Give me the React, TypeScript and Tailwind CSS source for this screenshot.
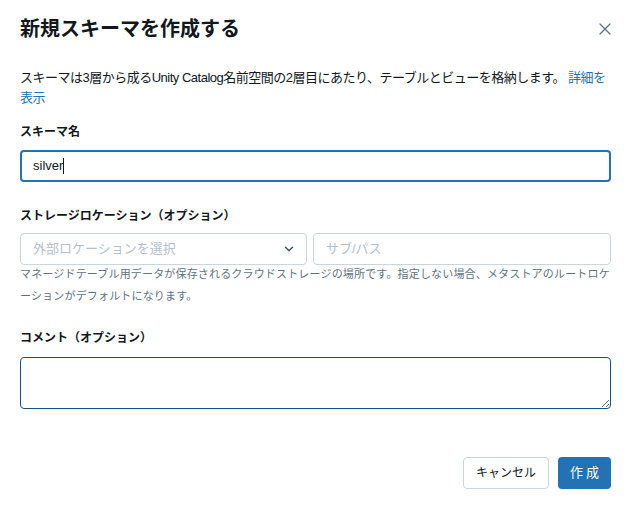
import { X, ChevronDown } from "lucide-react"

export default function App() {
  return (
    <div
      className="w-[631px] h-[510px] bg-white flex flex-col px-5 text-[#11171c]"
      style={{ fontFamily: '"Liberation Sans", "Noto Sans CJK JP", sans-serif' }}
    >
      {/* Header */}
      <div className="flex items-center justify-between pt-[16px]">
        <h1 className="text-[20px] font-bold leading-[26px]">新規スキーマを作成する</h1>
        <button className="text-[#5f7281] -mr-1">
          <X size={20} strokeWidth={1.5} />
        </button>
      </div>

      {/* Description */}
      <p className="mt-[26px] text-[13px] leading-[20px] tracking-[-0.5px]">
        スキーマは3層から成るUnity Catalog名前空間の2層目にあたり、テーブルとビューを格納します。{" "}
        <a className="text-[#2272b4]">詳細を表示</a>
      </p>

      {/* Schema name */}
      <label className="mt-[14px] text-[12px] font-semibold leading-[20px]">スキーマ名</label>
      <div className="mt-[8px] h-[32px] rounded-[4px] border-2 border-[#2272b4] flex items-center px-[11px] text-[13px]">
        silver<span className="w-px h-[16px] bg-[#11171c]" />
      </div>

      {/* Storage location */}
      <label className="mt-[24px] text-[12px] font-semibold leading-[20px]">
        ストレージロケーション（オプション）
      </label>
      <div className="mt-[7px] flex gap-[6px]">
        <div className="w-[287px] h-[32px] rounded-[4px] border border-[#cbd5e1] flex items-center justify-between px-[12px] text-[13px] text-[#b6c0ca]">
          <span>外部ロケーションを選択</span>
          <ChevronDown size={14} strokeWidth={2.5} className="text-[#445461] -mr-[2px]" />
        </div>
        <div className="flex-1 h-[32px] rounded-[4px] border border-[#cbd5e1] flex items-center px-[12px] text-[13px] text-[#b6c0ca]">
          サブ/パス
        </div>
      </div>
      <p className="-mt-[2px] text-[11px] leading-[22px] tracking-[0.17px] text-[#5f7281]">
        マネージドテーブル用データが保存されるクラウドストレージの場所です。指定しない場合、メタストアのルートロケーションがデフォルトになります。
      </p>

      {/* Comment */}
      <label className="mt-[21px] text-[12px] font-semibold leading-[20px]">コメント（オプション）</label>
      <textarea className="mt-[9px] h-[52px] rounded-[4px] border border-[#0e538b] outline-none resize-y" />

      {/* Footer */}
      <div className="mt-[48px] flex justify-end gap-[9px]">
        <button className="h-[32px] px-[12px] rounded-[4px] border border-[#cbd5e1] text-[12px] text-[#11171c] bg-white">
          キャンセル
        </button>
        <button className="h-[32px] pl-[12px] pr-[9px] rounded-[4px] bg-[#2272b4] text-[13px] text-white tracking-[3px]">
          作成
        </button>
      </div>
    </div>
  )
}
